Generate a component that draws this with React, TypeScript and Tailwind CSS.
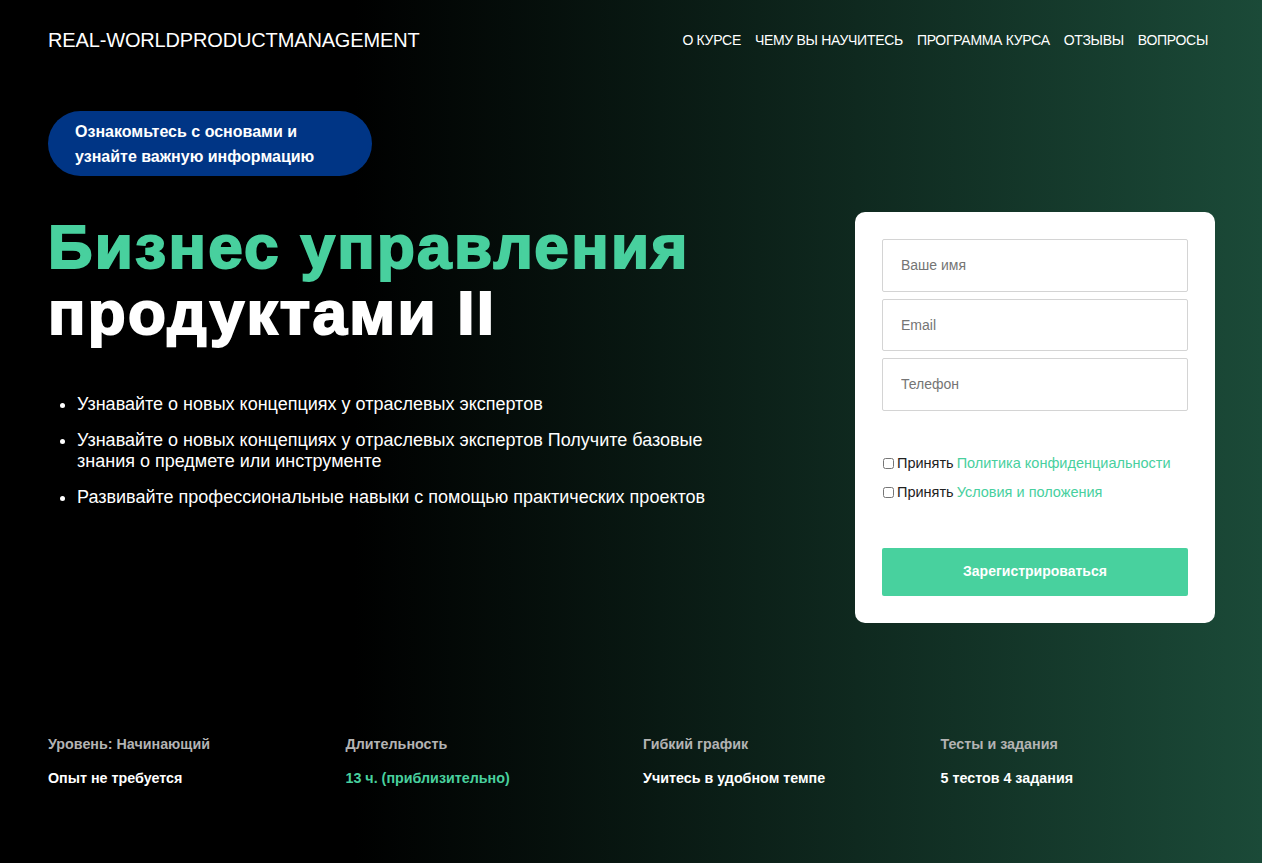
const navItems = ["О курсе", "Чему вы научитесь", "Программа курса", "Отзывы", "Вопросы"];

const points = [
  "Узнавайте о новых концепциях у отраслевых экспертов",
  "Узнавайте о новых концепциях у отраслевых экспертов Получите базовые знания о предмете или инструменте",
  "Развивайте профессиональные навыки с помощью практических проектов",
];

const stats = [
  { label: "Уровень: Начинающий", value: "Опыт не требуется", accent: false },
  { label: "Длительность", value: "13 ч. (приблизительно)", accent: true },
  { label: "Гибкий график", value: "Учитесь в удобном темпе", accent: false },
  { label: "Тесты и задания", value: "5 тестов 4 задания", accent: false },
];

const SignupForm = () => {
  return (
    <form className="w-[360px] bg-white rounded-[10px] px-[27px] pt-[27px] pb-[27px]">
      <div className="flex flex-col gap-[7px]">
        {["Ваше имя", "Email", "Телефон"].map((p) => (
          <input
            key={p}
            type="text"
            placeholder={p}
            className="h-[52.5px] w-full border border-[#d4d4d4] rounded-[2px] px-[18px] text-[14px] text-black placeholder:text-[#757575] outline-none"
          />
        ))}
      </div>
      <div className="mt-[43px] flex flex-col gap-[10px] text-[14.5px] text-[#222]">
        <label className="flex items-center gap-[3px] leading-[19px]">
          <input type="checkbox" className="w-[11px] h-[11px] m-0 ml-[1px]" />
          Принять <span className="text-[#48d09e]">Политика конфиденциальности</span>
        </label>
        <label className="flex items-center gap-[3px] leading-[19px]">
          <input type="checkbox" className="w-[11px] h-[11px] m-0 ml-[1px]" />
          Принять <span className="text-[#48d09e]">Условия и положения</span>
        </label>
      </div>
      <button
        type="button"
        className="mt-[46px] w-full h-[48px] bg-[#48d19e] rounded-[2px] text-white text-[14px] font-bold"
      >
        Зарегистрироваться
      </button>
    </form>
  );
};

export default function App() {
  return (
    <div
      className="min-h-[863px] w-full bg-[linear-gradient(90deg,#000_0%,#000_28%,#1b4a38_100%)] text-white px-[48px]"
      style={{ fontFamily: '"Liberation Sans", Arial, sans-serif' }}
    >
      <header className="flex items-center justify-between h-[80px] pr-[6px]">
        <div className="text-[20px] tracking-[-0.15px] leading-none">REAL-WORLDPRODUCTMANAGEMENT</div>
        <nav className="flex gap-[14px] text-[14px] uppercase tracking-[-0.3px]">
          {navItems.map((n) => (
            <a key={n} href="#">
              {n}
            </a>
          ))}
        </nav>
      </header>

      <div className="mt-[31px] w-[324px] h-[65px] rounded-full bg-[#003585] pl-[27px] flex flex-col justify-center text-[16px] font-bold leading-[25px]">
        <span>Ознакомьтесь с основами и</span>
        <span>узнайте важную информацию</span>
      </div>

      <div className="flex justify-between items-start">
        <div className="w-[700px]">
          <h1 className="mt-[38px] text-[62px] font-bold leading-[66px] tracking-[2.3px] [-webkit-text-stroke:2px_currentColor]">
            <span className="text-[#48d09e]">Бизнес управления</span>
            <br />
            продуктами II
          </h1>
          <ul className="mt-[48px] list-disc pl-[29px] text-[18px] leading-[21px] flex flex-col gap-[15px]">
            {points.map((p) => (
              <li key={p}>{p}</li>
            ))}
          </ul>
        </div>
        <div className="mt-[36px] mr-[-1px]">
          <SignupForm />
        </div>
      </div>

      <div className="mt-[111px] grid grid-cols-4 w-[1190px] text-[14.3px] font-bold">
        {stats.map((s) => (
          <div key={s.label} className="flex flex-col gap-[13px]">
            <span className="text-[#b3b3b3]">{s.label}</span>
            <span className={s.accent ? "text-[#48d09e]" : "text-white"}>{s.value}</span>
          </div>
        ))}
      </div>
    </div>
  );
}
